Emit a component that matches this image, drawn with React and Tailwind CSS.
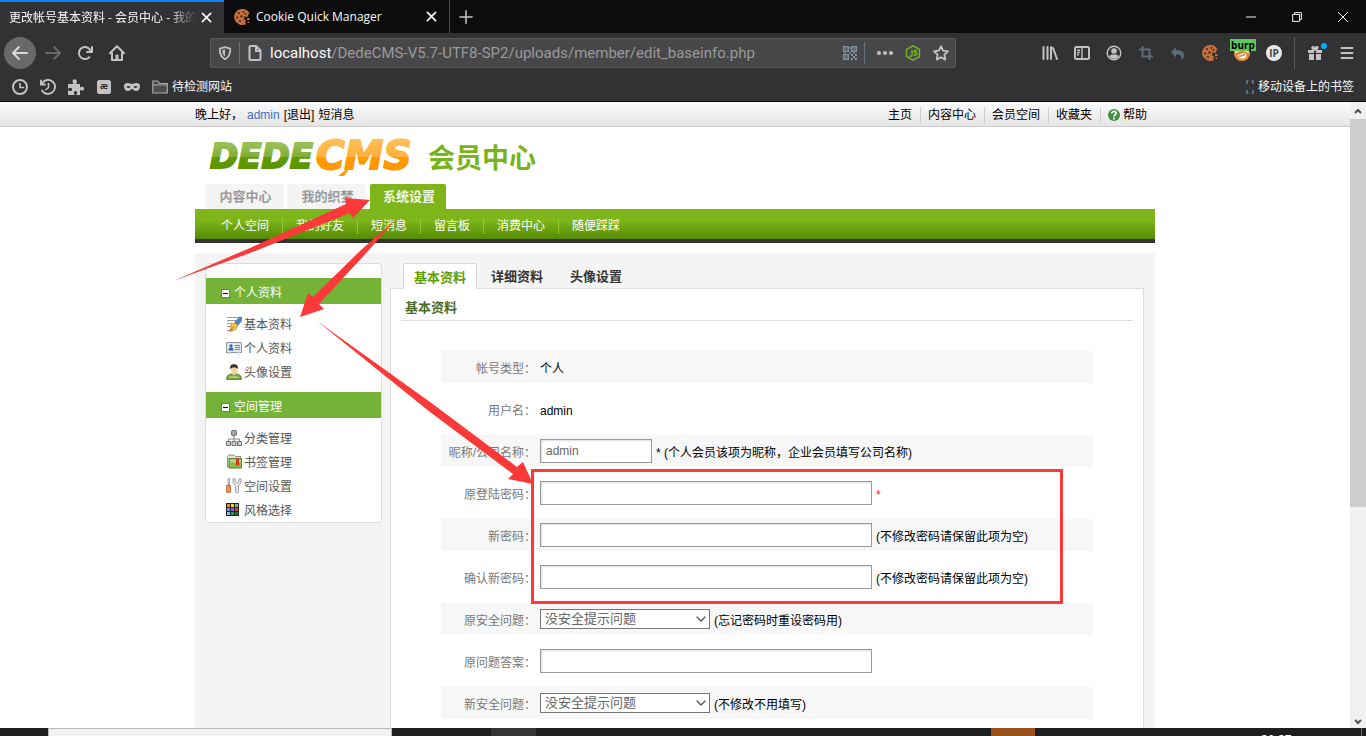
import { useState } from 'react';
import { ChevronDown } from 'lucide-react';

const topLinks = ['主页', '内容中心', '会员空间', '收藏夹'];
const subLinks = ['个人空间', '我的好友', '短消息', '留言板', '消费中心', '随便踩踩'];

const Svg = ({ size = 16, className = '', children }) => (
  <svg width={size} height={size} viewBox="0 0 16 16" fill="none" className={`shrink-0 ${className}`} aria-hidden="true">
    {children}
  </svg>
);

/* ---------- browser icons ---------- */

const BackIcon = () => (
  <Svg>
    <path fill="currentColor" d="M15 7H3.4l4.3-4.3a1 1 0 0 0-1.4-1.4l-6 6a1 1 0 0 0 0 1.4l6 6a1 1 0 0 0 1.4-1.4L3.4 9H15a1 1 0 0 0 0-2z" />
  </Svg>
);

const ForwardIcon = () => (
  <Svg>
    <path fill="currentColor" d="M1 7h11.6L8.3 2.7a1 1 0 0 1 1.4-1.4l6 6a1 1 0 0 1 0 1.4l-6 6a1 1 0 0 1-1.4-1.4L12.6 9H1a1 1 0 0 1 0-2z" />
  </Svg>
);

const ReloadIcon = () => (
  <Svg>
    <path fill="currentColor" d="M15 1a1 1 0 0 0-1 1v2.4A7 7 0 1 0 8 15a7 7 0 0 0 5-2 1 1 0 0 0-1.4-1.5A5 5 0 1 1 12.5 6H10a1 1 0 0 0 0 2h5a1 1 0 0 0 1-1V2a1 1 0 0 0-1-1z" />
  </Svg>
);

const HomeIcon = () => (
  <Svg>
    <path stroke="currentColor" strokeWidth="2" strokeLinecap="round" strokeLinejoin="round" d="M1 8.2 8 1.3l7 6.9M3 8v7h10V8" />
    <path fill="currentColor" d="M6.5 15v-4.5a1 1 0 0 1 1-1h1a1 1 0 0 1 1 1V15z" />
  </Svg>
);

const CloseIcon = () => (
  <Svg size={11}>
    <path stroke="currentColor" strokeWidth="2.4" strokeLinecap="round" d="m2 2 12 12M14 2 2 14" />
  </Svg>
);

const ShieldIcon = () => (
  <Svg size={14}>
    <path stroke="currentColor" strokeWidth="2" strokeLinejoin="round" d="M8 1.2 14 3c0 5-.5 9.5-6 12C2.5 12.5 2 8 2 3z" />
    <path fill="currentColor" d="M8 4v8c-2.500-1.500-3-4-3-7.200z" />
  </Svg>
);

const PageIcon = () => (
  <Svg>
    <path stroke="currentColor" strokeWidth="2" strokeLinejoin="round" d="M3.5 1h5.5l4.500 4.500V14a1 1 0 0 1-1 1h-9a1 1 0 0 1-1-1V2a1 1 0 0 1 1-1zM9 1v5h4.500" />
  </Svg>
);

const QrIcon = () => (
  <Svg>
    <path stroke="currentColor" strokeWidth="1.5" d="M1.7 1.7h4.6v4.6H1.700zM9.700 1.700h4.600v4.600H9.700zM1.700 9.700h4.600v4.600H1.700z" />
    <path fill="currentColor" d="M3.300 3.300h1.400v1.400H3.300zM11.300 3.300h1.400v1.400h-1.400zM3.300 11.300h1.400v1.400H3.300zM9 9h2v2H9zM11 11h2v2h-2zM13 9h2v2h-2zM9 13h2v2H9zM13 13h2v2h-2zM7.300 2h1.400v2H7.300zM7.300 7h1.400v2H7.300zM2 7.300h2v1.400H2zM11 7.300h2v1.400h-2z" />
  </Svg>
);

const DotsIcon = () => (
  <Svg>
    <circle cx="2" cy="8" r="2" fill="currentColor" />
    <circle cx="8" cy="8" r="2" fill="currentColor" />
    <circle cx="14" cy="8" r="2" fill="currentColor" />
  </Svg>
);

const NodeIcon = () => (
  <Svg className="text-[#76b82a]">
    <path stroke="currentColor" strokeWidth="1.4" strokeLinejoin="round" d="m8 .8 6.500 3.600v7.200L8 15.200l-6.500-3.600V4.400z" />
    <path stroke="currentColor" strokeWidth="1.4" d="M7 4.800v5.500c0 1.200-1.800 1.200-2.800.5M12 6c-.8-.8-3-.8-3 .5 0 1.600 3 .8 3 2.500 0 1.500-2.500 1.400-3.300.5" />
  </Svg>
);

const StarIcon = () => (
  <Svg>
    <path stroke="currentColor" strokeWidth="1.8" strokeLinejoin="round" d="m8 1.200 2.100 4.500 4.900.6-3.600 3.400.9 4.900L8 12.200l-4.300 2.400.9-4.900L1 6.300l4.900-.6z" />
  </Svg>
);

const LibraryIcon = () => (
  <Svg>
    <path stroke="currentColor" strokeWidth="2" strokeLinecap="round" d="M1.500 2v12M5.500 2v12M9 2v12M11 3l4 11" />
  </Svg>
);

const SidebarIcon = () => (
  <Svg>
    <rect x="1" y="2" width="14" height="12" rx="1.5" stroke="currentColor" strokeWidth="2" />
    <path stroke="currentColor" strokeWidth="1.4" d="M8 2v12M3 5.200h3M3 7.500h3M3 9.800h2" />
  </Svg>
);

const AccountIcon = () => (
  <Svg>
    <circle cx="8" cy="8" r="6.8" stroke="currentColor" strokeWidth="1.4" />
    <circle cx="8" cy="6" r="2.8" fill="currentColor" />
    <path fill="currentColor" d="M3.200 11.300c1-1.300 2.300-1.800 3-1.800h3.600c.7 0 2 .5 3 1.800a5.800 5.800 0 0 1-9.600 0z" />
  </Svg>
);

const CropIcon = () => (
  <Svg className="text-[#5d6b79]">
    <path stroke="currentColor" strokeWidth="2" d="M4.500 1v10.500H15M1 4.500h10.500V15" />
  </Svg>
);

const UndoIcon = () => (
  <Svg className="text-[#5d6b79]">
    <path fill="currentColor" d="M6 2v3c5 0 8.500 2 8 6-.3 2-1.500 3.400-3 4 1.500-3.500 0-5.500-5-5.500v3L1 7.300z" />
  </Svg>
);

const CookieIcon = () => (
  <Svg>
    <path fill="#c2703e" d="M8 0a8 8 0 1 0 4 15l-1-2 1.500-1.500-2.500-1 .5-3 3 .5.500-2 1.500-1.500A8 8 0 0 0 8 0z" />
    <g fill="#54291a">
      <circle cx="5" cy="4" r="1.1" />
      <circle cx="9.5" cy="3" r="1" />
      <circle cx="3.2" cy="8.5" r="1.1" />
      <circle cx="7.5" cy="7.5" r="1.2" />
      <circle cx="6" cy="12" r="1.1" />
      <circle cx="11.500" cy="5" r=".9" />
    </g>
    <path fill="#c2703e" d="M13 9h2.500v2H13zM13.500 12.500H15V14h-1.500z" />
  </Svg>
);

const FoxIcon = () => (
  <Svg size={18}>
    <circle cx="8" cy="8" r="7" fill="#e8e2d8" />
    <path fill="#e8872b" d="M1 7c3 2 4-1 7-1s4 3 7 1c0 5-3 8-7 8S1 12 1 7z" />
    <path fill="#fff" d="M4 10c2 0 5-3 8-1 0 3-2 4-4 4s-4-1-4-3z" />
    <path stroke="#b65d12" d="M5 11c2 0 4-.5 6-2" />
  </Svg>
);

const GiftIcon = () => (
  <Svg>
    <path fill="currentColor" d="M1 5h6v3H1zM9 5h6v3H9zM2 9h5v6H2zM9 9h5v6H9z" />
    <path stroke="currentColor" strokeWidth="1.6" d="M8 5C5 4 4.500 2.500 5.500 1.800S7.500 2.500 8 5c.5-2.500 1.500-3.900 2.500-3.200S11 4 8 5z" />
  </Svg>
);

const MenuIcon = () => (
  <Svg>
    <path stroke="currentColor" strokeWidth="2" strokeLinecap="round" d="M2.500 3h11M2.500 8h11M2.500 13h11" />
  </Svg>
);

const ClockIcon = () => (
  <Svg>
    <circle cx="8" cy="8" r="7" stroke="currentColor" strokeWidth="2" />
    <path stroke="currentColor" strokeWidth="1.6" strokeLinecap="round" d="M8 4.500V8.500h3.500" />
  </Svg>
);

const HistoryIcon = () => (
  <Svg>
    <path stroke="currentColor" strokeWidth="1.9" strokeLinecap="round" d="M2.200 4A7 7 0 1 1 2 11.500M1 1.500V5.500h4" />
    <path stroke="currentColor" strokeWidth="1.6" strokeLinecap="round" d="M8.500 4.500V8.500L6 10.500" />
  </Svg>
);

const PuzzleIcon = () => (
  <Svg>
    <path fill="currentColor" d="M4.500 2.500a2.200 2.200 0 1 1 4.400 0c0 .9-.6 1.200-.6 2.500H12v3.500c1.200 0 1.200-.7 2.200-.7a1.900 1.900 0 0 1 0 3.800c-1 0-1.200-.7-2.200-.7V16H8.500c0-1.400.7-1.600.7-2.400a1.700 1.700 0 0 0-3.400 0c0 .8.700 1 .7 2.400H0v-4.500c1.500 0 1.700.6 2.500.6a1.600 1.600 0 0 0 0-3.300C1.700 8.800 1.500 9.500 0 9.500V5h5.200c0-1.300-.7-1.600-.7-2.500z" />
  </Svg>
);

const MaskIcon = () => (
  <Svg>
    <path fill="currentColor" fillRule="evenodd" d="M0 7c0-2 1.500-3 3.500-3S7 5 8 5s2.500-1 4.500-1S16 5 16 7c0 3-1.500 5-4 5-2 0-3-2-4-2s-2 2-4 2c-2.500 0-4-2-4-5zm2.500 1c.7 1.200 3.200 1.200 4 0-.8-1.400-3.300-1.400-4 0zm7 0c.8 1.200 3.300 1.200 4 0-.7-1.400-3.200-1.400-4 0z" />
  </Svg>
);

const FolderIcon = () => (
  <Svg>
    <path fill="#4c4c4e" stroke="currentColor" strokeWidth="1.2" d="M.8 14V2h5l1.500 2.500h8V14zM.8 6h14.500" />
  </Svg>
);

/* ---------- member centre icons ---------- */

const PenIcon = () => (
  <Svg>
    <path stroke="#9a9a9a" strokeWidth="1" d="M1 1.500h12M1 4.500h9M1 7.500h5M1 10.500h3M1 14.500h3" />
    <path fill="#f3c84b" stroke="#a97412" strokeWidth=".8" d="m4 15.500 1-6.500 4-2.500L12 9l-2.500 4.500z" />
    <path fill="#4b87d6" stroke="#2a5aa0" strokeWidth=".6" d="m9 6 4.500-5 2.300.5-.3 3.500L12 9z" />
    <path stroke="#8c5b0a" strokeWidth=".8" d="m4.500 14.500 3.500-4" />
  </Svg>
);

const CardIcon = () => (
  <Svg>
    <path fill="#e4e7ea" stroke="#8d9399" d="M.5 2.500h15v10h-2l-1 1-1-1h-7l-1 1-1-1h-2z" />
    <circle cx="5" cy="5.8" r="1.6" fill="#2d69b8" />
    <path fill="#2d69b8" d="M2.500 10.500C2.500 8 3.500 7.500 5 7.500s2.500.5 2.500 3z" />
    <path stroke="#7c8288" d="M9 5.500h5M9 7.500h5M9 9.500h5" />
  </Svg>
);

const UserIcon = () => (
  <Svg>
    <path fill="#7aa83a" stroke="#4c7421" strokeWidth=".8" d="M.6 15.400c0-4 2-5 4.900-5.500h5c2.900.5 4.900 1.500 4.900 5.500z" />
    <path fill="#f6d39a" d="M5 5c0-3 6-3 6 0 0 3-1 5.500-3 6.500C6 10.500 5 8 5 5z" />
    <path fill="#3d2b1c" d="M4.300 5.500C3.500 1.500 5.500.3 8 .3s4.500 1.200 3.700 5.200C11 4 10.500 3.500 8 3.500S5 4 4.300 5.500z" />
    <path fill="#a9cc6c" d="M2 14c1-1.500 3-2 6-2s5 .5 6 2z" />
  </Svg>
);

const TreeIcon = () => (
  <Svg>
    <path stroke="#888" d="M8 6v3M2.500 11V9h11v2M8 9v2" />
    <rect x="5.5" y=".5" width="5" height="5" rx="1" fill="#a4a4a4" stroke="#6c6c6c" />
    <path fill="#cfcfcf" stroke="#707070" d="M.5 11.500h4v4h-4zM6 11.500h4v4H6zM11.500 11.500h4v4h-4z" />
  </Svg>
);

const BookmarkFolderIcon = () => (
  <Svg>
    <path fill="#dfe3da" stroke="#777" strokeWidth=".8" d="M1.500 13V2.500L3 1h5l1.500 1.500h5V13z" />
    <path fill="#8cb749" stroke="#4c7421" strokeWidth=".8" d="M3 4.500h12.500v9.600H3z" />
    <path fill="#b8d683" d="M4 5.500h10.500v3H4z" />
    <path fill="#d8341e" d="M10 4.500h3V12l-1.500-1.500L10 12z" />
  </Svg>
);

const ToolsIcon = () => (
  <Svg>
    <path fill="#ddd" stroke="#8b8b8b" strokeWidth=".7" d="M2 .6h1.500V7H2z" />
    <path fill="#f0935a" stroke="#b4562a" strokeWidth=".8" d="M.6 7.500h4v6.800H.6z" />
    <path fill="#e8e8e8" stroke="#999" strokeWidth=".9" d="M7 .8v4.200l2.500 2.500v6c0 2 3 2 3 0v-6L15 5V.8h-2.200V4L11 5 9.200 4V.8z" />
  </Svg>
);

const PaletteIcon = () => (
  <Svg>
    <path fill="#222" d="M0 1h13v13H0z" />
    <path fill="#f08a1c" d="M1 2h3v3H1z" />
    <path fill="#f2d51e" d="M5 2h3v3H5z" />
    <path fill="#7fb0a8" d="M9 2h3v3H9z" />
    <path fill="#7d8cf0" d="M1 6h3v3H1z" />
    <path fill="#8a5fe0" d="M5 6h3v3H5z" />
    <path fill="#d24a1e" d="M9 6h3v3H9z" />
    <path fill="#8cc0f0" d="M1 10h3v3H1z" />
    <path fill="#1f9a78" d="M5 10h3v3H5z" />
    <path fill="#13813a" d="M9 10h3v3H9z" />
  </Svg>
);

const HelpIcon = () => (
  <Svg size={12}>
    <circle cx="8" cy="8" r="8" fill="#3f9140" />
    <path stroke="#fff" strokeWidth="2.2" d="M5 6c0-4 6-3.500 6-.3C11 7.800 8 7.500 8 10.200M8 11.500V14" />
  </Svg>
);

const menuGroups = [
  {
    title: '个人资料',
    items: [['基本资料', PenIcon], ['个人资料', CardIcon], ['头像设置', UserIcon]],
  },
  {
    title: '空间管理',
    items: [['分类管理', TreeIcon], ['书签管理', BookmarkFolderIcon], ['空间设置', ToolsIcon], ['风格选择', PaletteIcon]],
  },
];

/* ---------- browser frame ---------- */

const ToolButton = ({ label, className = 'w-8', children }) => (
  <button aria-label={label} className={`relative flex h-8 shrink-0 items-center justify-center ${className}`}>
    {children}
  </button>
);

const TabStrip = () => (
  <div className="flex h-[33px] shrink-0 bg-[#0c0c0d] text-xs text-[#f9f9fa]">
    <div className="flex w-56 items-center border-t-2 border-[#0a84ff] bg-[#323234] pr-3 pl-[9px]">
      <span className="flex-1 overflow-hidden whitespace-nowrap [mask-image:linear-gradient(to_right,black_85%,transparent)]">
        更改帐号基本资料 - 会员中心 - 我的织梦
      </span>
      <button aria-label="关闭标签页" className="pl-1"><CloseIcon /></button>
    </div>
    <div className="flex w-[226px] items-center border-r border-[#4a4a4c] pr-3 pl-[10px]">
      <CookieIcon />
      <span className="flex-1 pl-1.5">Cookie Quick Manager</span>
      <button aria-label="关闭标签页"><CloseIcon /></button>
    </div>
    <button aria-label="新建标签页" className="flex w-8 items-center justify-center text-[#c3c3c4]">
      <Svg size={14}><path stroke="currentColor" strokeWidth="1.8" strokeLinecap="round" d="M8 1v14M1 8h14" /></Svg>
    </button>
    <div className="ml-auto flex">
      <button aria-label="最小化" className="flex w-[46px] items-center justify-center">
        <Svg size={10}><path stroke="currentColor" strokeWidth="1.6" d="M0 8h16" /></Svg>
      </button>
      <button aria-label="还原" className="flex w-[46px] items-center justify-center">
        <Svg size={10}><path stroke="currentColor" strokeWidth="1.6" d="M1 4h11v11H1zM4 4V1h11v11h-3" /></Svg>
      </button>
      <button aria-label="关闭" className="flex w-[46px] items-center justify-center">
        <Svg size={10}><path stroke="currentColor" strokeWidth="1.6" d="m0 0 16 16M16 0 0 16" /></Svg>
      </button>
    </div>
  </div>
);

const AddressBar = () => (
  <div className="mr-[78px] ml-[77px] flex h-[30px] min-w-0 flex-1 items-center rounded-xs border border-[#5a5a5d] bg-[#474749]">
    <div className="flex w-7 justify-center"><ShieldIcon /></div>
    <div className="h-[22px] w-px bg-[#66707a]"></div>
    <div className="flex w-[30px] justify-center"><PageIcon /></div>
    <span className="flex-1 truncate font-[Roboto,sans-serif] text-[15px] text-[#9a9a9b]">
      <span className="text-[#f9f9fa]">localhost</span>/DedeCMS-V5.7-UTF8-SP2/uploads/member/edit_baseinfo.php
    </span>
    <div className="flex w-7 justify-center text-[#8090a0]"><QrIcon /></div>
    <div className="mr-1.5 h-[22px] w-px bg-[#66707a]"></div>
    <ToolButton label="页面操作" className="w-7"><DotsIcon /></ToolButton>
    <ToolButton label="Node" className="w-7"><NodeIcon /></ToolButton>
    <ToolButton label="收藏" className="w-7"><StarIcon /></ToolButton>
  </div>
);

const Toolbar = () => (
  <div className="flex h-10 shrink-0 items-center bg-[#323234] pr-[3px] pl-1 text-[#c3c3c4]">
    <button aria-label="后退" className="mr-px flex size-8 items-center justify-center rounded-full bg-[#69696a] text-[#dadadb]"><BackIcon /></button>
    <ToolButton label="前进"><span className="text-[#69696a]"><ForwardIcon /></span></ToolButton>
    <ToolButton label="刷新"><ReloadIcon /></ToolButton>
    <ToolButton label="主页"><HomeIcon /></ToolButton>
    <AddressBar />
    <ToolButton label="我的足迹"><LibraryIcon /></ToolButton>
    <ToolButton label="侧栏"><SidebarIcon /></ToolButton>
    <ToolButton label="账户"><AccountIcon /></ToolButton>
    <ToolButton label="截图"><CropIcon /></ToolButton>
    <ToolButton label="撤销"><UndoIcon /></ToolButton>
    <ToolButton label="Cookie"><CookieIcon /></ToolButton>
    <ToolButton label="代理">
      <FoxIcon />
      <span className="absolute top-0.5 left-1 flex h-3 w-[26px] items-center justify-center bg-[#5fc95f] text-[10px] leading-3 font-bold text-black">burp</span>
    </ToolButton>
    <ToolButton label="IP">
      <span className="flex size-4 items-center justify-center rounded-full bg-[#e8e8e8] text-[10px] font-bold text-[#444]">IP</span>
    </ToolButton>
    <div className="mx-1 h-8 w-px bg-[#5a5a5c]"></div>
    <ToolButton label="新功能">
      <GiftIcon />
      <span className="absolute top-1.5 right-1 size-1.5 rounded-full bg-[#00b3f4]"></span>
    </ToolButton>
    <ToolButton label="菜单"><MenuIcon /></ToolButton>
  </div>
);

const BookmarksBar = () => (
  <div className="flex h-[29px] shrink-0 items-center border-b border-[#0c0c0d] bg-[#323234] pr-3 pl-1.5 text-xs text-[#c3c3c4]">
    <ToolButton label="最近" className="w-7"><ClockIcon /></ToolButton>
    <ToolButton label="历史" className="w-7"><HistoryIcon /></ToolButton>
    <ToolButton label="扩展" className="w-7"><PuzzleIcon /></ToolButton>
    <ToolButton label="编码" className="w-7">
      <span className="flex size-[14px] justify-center rounded-xs border border-[#c3c3c4] bg-[#c3c3c4] text-[9px] leading-[9px] font-bold text-[#323234]">æ</span>
    </ToolButton>
    <ToolButton label="隐私" className="w-7"><MaskIcon /></ToolButton>
    <button className="flex items-center gap-1 pl-1.5 text-[#f9f9fa]"><span className="text-[#a9a9aa]"><FolderIcon /></span>待检测网站</button>
    <button className="ml-auto flex items-center gap-1 text-[#f9f9fa]">
      <svg width="8" height="14" viewBox="0 0 8 14" aria-hidden="true">
        <path fill="none" stroke="#5d6b79" strokeWidth="2" d="M1 4V1h1.500M5.500 1H7v3M1 10v3h1.500M5.500 13H7v-3" />
      </svg>
      移动设备上的书签
    </button>
  </div>
);

const ScrollBar = () => (
  <div className="flex w-4 shrink-0 flex-col bg-[#f0f0f0]" aria-hidden="true">
    <div className="flex h-[17px] justify-center pt-1.5">
      <svg width="8" height="6" viewBox="0 0 8 6"><path d="M1 5l3-3 3 3" fill="none" stroke="#505050" strokeWidth="2" /></svg>
    </div>
    <div className="h-[62%] bg-[#cdcdcd]"></div>
    <div className="mt-auto flex h-[13px] justify-center pt-1">
      <svg width="8" height="6" viewBox="0 0 8 6"><path d="M1 1l3 3 3-3" fill="none" stroke="#505050" strokeWidth="2" /></svg>
    </div>
  </div>
);

const TaskBar = () => (
  <div className="flex h-2 shrink-0 bg-[#1e1e1e]">
    <div className="w-12"></div>
    <div className="w-[344px] border border-b-0 border-[#b8b8b8] bg-[#f2f2f2]"></div>
    <div className="ml-[99px] w-[45px] bg-[#363433]"></div>
    <div className="ml-auto w-11 bg-[#9a501a]"></div>
    <div className="ml-[226px] h-2 w-[100px] overflow-hidden pt-1 text-xs leading-4 text-white">20:27</div>
    <div className="mr-1 w-px bg-[#6a6a6a]"></div>
  </div>
);

/* ---------- page ---------- */

const TopBar = () => (
  <div className="border-b border-[#cfcfcf] bg-linear-to-b from-[#fbfbfb] to-[#e5e5e5]">
    <div className="mx-auto flex h-6 max-w-[960px] items-center pt-0.5 pr-2">
      <span>晚上好，</span>
      <a href="#" className="ml-1 text-[#3f6bc9]">admin</a>
      <a href="#" className="ml-1">[退出]</a>
      <a href="#" className="ml-1">短消息</a>
      <div className="ml-auto flex items-center">
        {topLinks.map((link) => (
          <a href="#" key={link} className="border-r border-[#cccccc] pr-2 pl-[7px] leading-4">{link}</a>
        ))}
        <a href="#" className="flex items-center gap-[3px] pl-[7px] leading-4"><HelpIcon />帮助</a>
      </div>
    </div>
  </div>
);

const Logo = () => (
  <svg width="340" height="50" viewBox="0 0 340 50" className="block overflow-visible" role="img" aria-label="DEDECMS 会员中心">
    <defs>
      <linearGradient id="green" x1="0" y1="10" x2="0" y2="34" gradientUnits="userSpaceOnUse">
        <stop offset="0" stopColor="#97bf55" />
        <stop offset=".5" stopColor="#7dae35" />
        <stop offset=".5" stopColor="#619c03" />
        <stop offset="1" stopColor="#5a9400" />
      </linearGradient>
      <linearGradient id="orange" x1="0" y1="8" x2="0" y2="36" gradientUnits="userSpaceOnUse">
        <stop offset="0" stopColor="#ffbd52" />
        <stop offset=".5" stopColor="#ffaf3c" />
        <stop offset=".5" stopColor="#ff9a00" />
        <stop offset="1" stopColor="#ff9800" />
      </linearGradient>
    </defs>
    <g fontFamily="DejaVu Sans" fontWeight="bold" fontStyle="italic">
      <text x="5" y="33" fontSize="34" fill="url(#green)" stroke="url(#green)" strokeWidth="2">DEDE</text>
      <text x="111" y="34" fontSize="39" fill="url(#orange)" stroke="url(#orange)" strokeWidth="2">CMS</text>
    </g>
    <path fill="#ff9a00" d="m143 33-10 8h6l11-15z" />
    <text x="223" y="33" fontSize="27" fontFamily="Noto Sans CJK SC" fontWeight="bold" fill="#78b31c">会员中心</text>
  </svg>
);

const MainNav = () => (
  <nav>
    <div className="flex items-end pl-2.5 text-[13px] leading-[25px] font-bold text-[#999999]">
      <a href="#" className="mr-[3px] w-[79px] bg-[#f4f4f4] pl-0.5 text-center">内容中心</a>
      <a href="#" className="mr-1 w-[79px] bg-[#f4f4f4] pl-0.5 text-center">我的织梦</a>
      <a href="#" className="w-[76px] rounded-t-xs bg-[#7db51b] pl-0.5 text-center text-[#f0f8e0]">系统设置</a>
    </div>
    <div className="flex h-[34px] items-center border-b-4 border-[#333333] bg-linear-to-b from-[#7db51b] from-40% to-[#568a03] pt-[3px] pl-[13px] text-white">
      {subLinks.map((link) => (
        <a href="#" key={link} className="border-r border-[#8fc92d] px-[13px] leading-4 last:border-r-0">{link}</a>
      ))}
    </div>
  </nav>
);

const SideMenu = () => (
  <aside className="w-[177px] shrink-0 rounded border border-[#dddddd] bg-white pt-3.5">
    {menuGroups.map((group, i) => (
      <div key={group.title} className={i > 0 ? 'pt-2' : ''}>
        <h3 className="flex h-[26px] items-center gap-1 bg-[#74b238] pt-1 pl-[15px] text-white">
          <span className="flex size-[9px] items-center justify-center border border-[#777777] bg-white">
            <span className="h-px w-[5px] bg-black"></span>
          </span>
          {group.title}
        </h3>
        <ul className="pt-2">
          {group.items.map(([name, Icon]) => (
            <li key={name}>
              <a href="#" className="flex h-6 items-center gap-0.5 pl-5 text-[#555555]"><Icon /><span className="pt-0.5">{name}</span></a>
            </li>
          ))}
        </ul>
      </div>
    ))}
  </aside>
);

const Row = ({ label, id, shaded, children }) => (
  <div className={`mb-2.5 flex h-8 items-center gap-1 ${shaded ? 'bg-[#f7f7f7]' : ''}`}>
    <label htmlFor={id} className="w-[95px] shrink-0 pt-[3px] text-right text-[#777777]">{label}：</label>
    {children}
  </div>
);

const Hint = ({ className = '', children }) => <span className={`pt-[3px] ${className}`}>{children}</span>;

const TextInput = ({ id, type = 'text', className = 'w-[332px]', defaultValue }) => (
  <input
    id={id}
    type={type}
    defaultValue={defaultValue}
    className={`h-6 border border-[#999999] bg-white px-[5px] text-[#666666] shadow-[inset_1px_1px_2px_#dddddd] outline-none ${className}`}
  />
);

const QuestionSelect = ({ id }) => (
  <div className="relative">
    <select id={id} className="block h-5 w-[170px] appearance-none border border-[#777777] bg-white pl-1 text-[13px] leading-4 text-[#666666]">
      <option>没安全提示问题</option>
    </select>
    <ChevronDown size={16} strokeWidth={2} className="pointer-events-none absolute top-0.5 right-px text-[#555555]" />
  </div>
);

// hand-drawn marks that walk through the steps
const Marks = () => (
  <svg width="960" height="600" viewBox="195 127 960 600" className="pointer-events-none absolute top-0 left-0 overflow-visible" aria-hidden="true">
    <g fill="#fb3938">
      <path d="M173 281 250 248 346 204 345 198 370 200 353 218 350 213 250 253z" />
      <path d="M395 220 369 250 319 304 324 309 300 317 308 293 313 297 361 250z" />
      <path d="M317 321 430 402 517 467 523 462 533 484 508 479 513 474 430 412z" />
    </g>
    <rect x="532.5" y="470.5" width="529" height="132" fill="none" stroke="#fb3938" strokeWidth="3" />
  </svg>
);

const ProfileForm = () => {
  const [tab, setTab] = useState('基本资料');

  return (
    <div className="flex flex-1 flex-col">
      <div className="flex items-end gap-px pl-[13px] text-[13px] font-bold">
        {['基本资料', '详细资料', '头像设置'].map((name) => (
          <button
            key={name}
            onClick={() => setTab(name)}
            className={
              tab === name
                ? 'relative z-10 -mb-px h-[26px] w-[74px] border border-b-0 border-[#dddddd] bg-white pt-0.5 text-[#619c03]'
                : 'h-[25px] w-[78px] pt-0.5 text-[#333333]'
            }
          >
            {name}
          </button>
        ))}
      </div>
      <div className="flex-1 border border-[#dddddd] bg-white px-2.5 pt-2">
        <h2 className="mb-[30px] h-6 border-b border-[#dddddd] pt-0.5 pl-1 text-[13px] font-bold text-[#4b6b2b]">{tab}</h2>
        <form className="mr-10 ml-10">
          <Row label="帐号类型" shaded><Hint>个人</Hint></Row>
          <Row label="用户名"><Hint>admin</Hint></Row>
          <Row label="昵称/公司名称" id="uname" shaded>
            <TextInput id="uname" defaultValue="admin" className="w-28" />
            <Hint>* (个人会员该项为昵称，企业会员填写公司名称)</Hint>
          </Row>
          <Row label="原登陆密码" id="oldpwd">
            <TextInput id="oldpwd" type="password" />
            <Hint className="text-[#ee2222]">*</Hint>
          </Row>
          <Row label="新密码" id="userpwd" shaded>
            <TextInput id="userpwd" type="password" />
            <Hint>(不修改密码请保留此项为空)</Hint>
          </Row>
          <Row label="确认新密码" id="userpwdok">
            <TextInput id="userpwdok" type="password" />
            <Hint>(不修改密码请保留此项为空)</Hint>
          </Row>
          <Row label="原安全问题" id="safequestion" shaded>
            <QuestionSelect id="safequestion" />
            <Hint>(忘记密码时重设密码用)</Hint>
          </Row>
          <Row label="原问题答案" id="safeanswer">
            <TextInput id="safeanswer" />
          </Row>
          <Row label="新安全问题" id="newsafequestion" shaded>
            <QuestionSelect id="newsafequestion" />
            <Hint>(不修改不用填写)</Hint>
          </Row>
        </form>
      </div>
    </div>
  );
};

export default function App() {
  return (
    <div className="flex h-screen flex-col overflow-hidden font-['Open_Sans','Noto_Sans_CJK_SC',sans-serif]">
      <TabStrip />
      <Toolbar />
      <BookmarksBar />
      <div className="flex min-h-0 flex-1">
        <main className="flex-1 overflow-hidden bg-white font-['Liberation_Sans','Noto_Sans_CJK_SC',sans-serif] text-xs text-black">
          <TopBar />
          <div className="relative mx-auto max-w-[960px]">
            <header className="h-[57px] pt-2 pl-2.5"><Logo /></header>
            <MainNav />
            <div className="mt-2.5 flex items-start bg-[#f4f4f4] pt-2.5 pr-[11px] pb-10 pl-2.5">
              <SideMenu />
              <div className="ml-2 flex flex-1"><ProfileForm /></div>
            </div>
            <Marks />
          </div>
        </main>
        <ScrollBar />
      </div>
      <TaskBar />
    </div>
  );
}
